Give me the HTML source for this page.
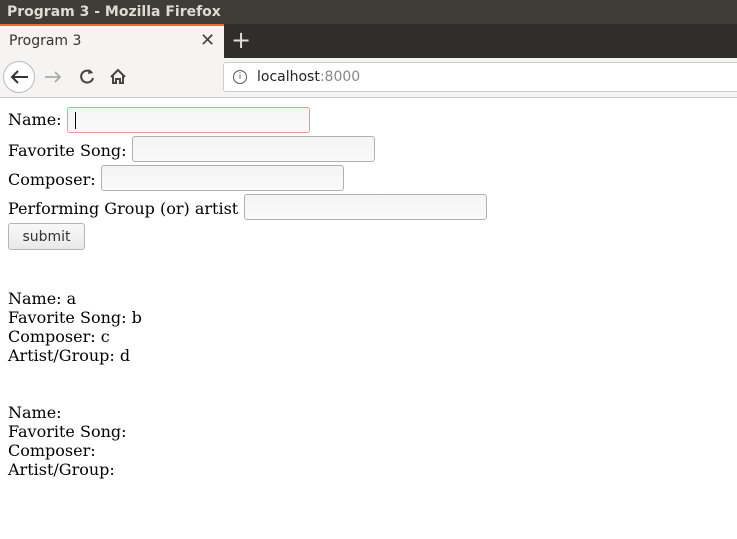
<!DOCTYPE html>
<html><head><style>
body{margin:0;width:737px;height:539px;overflow:hidden;background:#fff;position:relative;font-family:"DejaVu Serif","Liberation Serif",serif;font-size:16px;color:#000}
.a{position:absolute}
.ui{font-family:"DejaVu Sans","Liberation Sans",sans-serif}
.in{position:absolute;height:26px;width:243px;border:1px solid #b0b0b0;border-radius:3px;background:linear-gradient(#f4f4f4,#fafafa);box-sizing:border-box}
.t{position:absolute;left:8px;line-height:19px;white-space:nowrap}
</style></head><body>
<div class="a ui" style="left:0;top:0;width:737px;height:24px;background:#3e3d38;color:#dfdbd2;font-weight:bold;font-size:14px;line-height:24px;padding-left:7px;box-sizing:border-box">Program 3 - Mozilla Firefox</div>
<div class="a" style="left:0;top:24px;width:737px;height:34px;background:#2f2e2b"></div>
<div class="a ui" style="left:0;top:24px;width:224px;height:34px;background:#f5f4f2;border-top:2px solid #e86a3c;box-sizing:border-box;color:#333;font-size:14px;line-height:30px;padding-left:9px">Program 3<span class="a" style="left:200px;top:0;font-size:18px;color:#444">✕</span></div>
<div class="a ui" style="left:231px;top:26px;color:#ddd;font-size:24px;line-height:28px">+</div>
<div class="a" style="left:0;top:58px;width:737px;height:39px;background:#f5f4f2;border-bottom:1px solid #ccc"></div>
<div class="a" style="left:3px;top:61px;width:32px;height:32px;border:1px solid #bbb;border-radius:50%;background:#fff;box-sizing:border-box"></div>
<svg class="a" style="left:0;top:58px" width="140" height="39">
<path d="M28 19H12M18 13l-6 6 6 6" stroke="#333" stroke-width="2" fill="none"/>
<path d="M60 19H45M55 14l5 5-5 5" stroke="#aaa" stroke-width="1.8" fill="none"/>
<path d="M92 15a6 6 0 1 0 1 5" stroke="#444" stroke-width="2" fill="none"/><path d="M89 11l4 4-5 1z" fill="#444"/>
<path d="M111 19l7-7 7 7M113 18v7h3v-4h4v4h3v-7" stroke="#444" stroke-width="2" fill="none"/>
</svg>
<div class="a" style="left:223px;top:62px;width:520px;height:30px;border:1px solid #ccc;border-radius:3px;background:#fff;box-sizing:border-box"></div>
<div class="a" style="left:233px;top:70px;width:12px;height:12px;border:1px solid #555;border-radius:50%;font:9px/12px 'DejaVu Sans',sans-serif;text-align:center;color:#555">i</div>
<div class="a ui" style="left:257px;top:68px;font-size:14px;color:#222;line-height:18px">localhost<span style="color:#888">:8000</span></div>

<div class="t" style="top:110px">Name:</div>
<div class="in" style="left:67px;top:107px;border-color:#e39c88"></div>
<div class="a" style="left:75px;top:112px;width:1px;height:17px;background:#000"></div>
<div class="t" style="top:141px">Favorite Song:</div>
<div class="in" style="left:132px;top:136px"></div>
<div class="t" style="top:170px">Composer:</div>
<div class="in" style="left:101px;top:165px"></div>
<div class="t" style="top:199px">Performing Group (or) artist</div>
<div class="in" style="left:244px;top:194px"></div>
<div class="a ui" style="left:8px;top:223px;width:77px;height:27px;border:1px solid #b5b5b5;border-radius:3px;background:linear-gradient(#f8f8f8,#e9e9e9);box-sizing:border-box;text-align:center;font-size:14px;line-height:26px;color:#333">submit</div>

<div class="t" style="top:289px">Name: a<br>Favorite Song: b<br>Composer: c<br>Artist/Group: d</div>
<div class="t" style="top:403px">Name:<br>Favorite Song:<br>Composer:<br>Artist/Group:</div>
</body></html>
